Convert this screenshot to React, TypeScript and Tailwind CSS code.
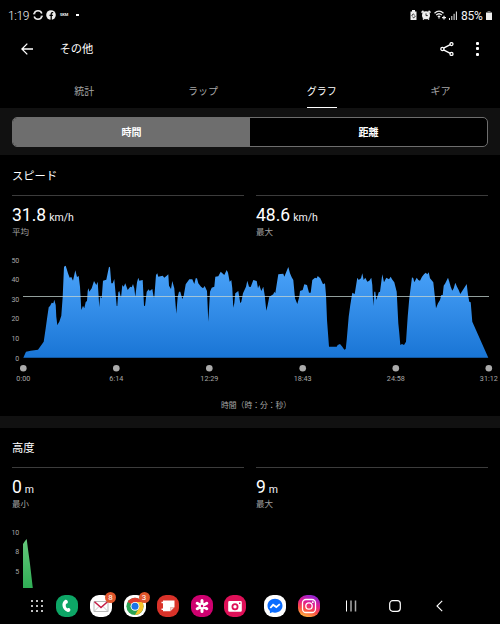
import type { ReactNode } from 'react';

// Speed samples, three points per pixel, 0 at the bottom is y=338
const speedSegments = [
  {
    start: 0,
    points:
      '70,338 78,320 92,317 114,314 131,290 137,250 142,215 146,187 150,183 155,173 160,175 163,164 167,180 169,215 172,240 178,230 184,212 188,155 192,65 197,62 204,85 209,98 214,96 219,107 226,76 231,96 236,93 240,125 244,195 249,182 253,190 257,171 261,168 263,137 266,130 268,140 275,130 282,108 289,120 293,110 298,187 300,155 305,160 309,107 319,104 327,65 330,67 334,115 338,115 343,102 350,183 352,183 355,142 358,138 363,158 367,120 371,125 376,115 383,135 391,125 395,127 399,117 403,130 406,155 411,112 415,98 418,107 428,105 432,182 435,183 440,140 446,133 449,138 457,132 461,157 463,157 468,90 472,85 475,95 488,92 493,98 500,92',
  },
  {
    start: 495,
    points:
      '10,88 12,122 18,132 22,108 28,130 34,206 38,155 42,140 46,140 52,162 56,152 62,118 73,103 82,103 88,117 92,100 96,100 100,115 108,125 114,130 119,123 126,138 130,230 135,140 140,128 148,125 151,95 160,94 167,80 178,90 185,75 189,83 194,110 199,105 202,130 205,188 208,175 211,145 220,138 226,175 229,170 234,145 243,125 247,107 252,125 257,126 265,105 275,108 279,130 283,120 289,138 295,125 299,150 304,197 308,180 313,155 325,148 328,140 331,145 340,88 355,86 358,95 370,66 375,85 380,97 385,105 390,160 397,177 403,155 405,138 413,135 418,118 426,120 432,143 437,143 442,105 450,98 455,100 458,93 466,100 474,118 480,115 483,150 486,225 492,305',
  },
  {
    start: 990,
    points:
      '0,305 20,305 23,300 30,297 37,305 43,314 47,312 50,285 56,215 61,180 67,143 74,147 82,98 86,105 93,100 97,85 101,105 106,98 112,110 118,107 124,98 127,120 130,183 133,140 136,140 139,165 146,142 150,140 157,88 162,112 169,98 177,103 182,95 186,103 193,112 200,140 205,235 208,265 211,300 216,297 222,300 228,290 233,215 238,160 246,97 250,100 253,112 260,98 265,105 270,107 276,95 282,88 287,83 292,88 296,82 300,100 310,112 314,150 318,190 324,175 330,165 334,150 338,150 341,122 346,115 354,98 358,110 362,125 367,137 371,130 376,113 381,125 386,135 391,147 402,130 410,117 414,150 418,170 422,172 427,230 475,338',
  },
];

const speedPoints = speedSegments
  .flatMap(({ start, points }) =>
    points.split(' ').map((p) => {
      const [x, y] = p.split(',').map(Number);
      return `${((x + start) / 3).toFixed(1)},${(y / 3).toFixed(1)}`;
    })
  )
  .join(' ');

const speedTicks = [
  { label: '50', y: 15 },
  { label: '40', y: 34.5 },
  { label: '30', y: 54 },
  { label: '20', y: 73.7 },
  { label: '10', y: 93.3 },
  { label: '0', y: 113 },
];

const timeTicks = [
  { label: '0:00', x: 23.3 },
  { label: '6:14', x: 116.3 },
  { label: '12:29', x: 209.3 },
  { label: '18:43', x: 302.7 },
  { label: '24:58', x: 395.8 },
  { label: '31:12', x: 488.8 },
];

const tabs = ['統計', 'ラップ', 'グラフ', 'ギア'];

function StatusBar() {
  return (
    <div className="flex h-[30px] shrink-0 items-center pl-2 pr-[8px] text-[11.5px] leading-none text-gray-100">
      <span className="mt-[1px] w-[21px] text-[12px] font-light tracking-[-0.4px]">1:19</span>
      <svg className="ml-1 h-[10px] w-[10px]" viewBox="0 0 10 10" fill="none" stroke="#eee" strokeWidth="1.5">
        <path d="M1.2 3.5A4 4 0 0 1 8.8 3.5M8.8 6.5A4 4 0 0 1 1.2 6.5" />
        <path d="M0 3.8h2.3M7.7 6.2H10" strokeWidth="1" />
      </svg>
      <svg className="ml-[3px] h-[10px] w-[10px]" viewBox="0 0 10 10">
        <circle cx="5" cy="5" r="4.8" fill="#eee" />
        <path d="M7.2 2.6H6.4Q5.2 2.6 5.2 4V10M3.5 5.3h3.4" fill="none" stroke="#000" strokeWidth="1.3" />
      </svg>
      <span className="ml-1 w-[9px] text-[4px] font-bold">5KM</span>
      <span className="ml-[7px] h-[2px] w-[3px] bg-white" />

      <div className="ml-auto flex items-center">
        <svg className="h-[10px] w-[7px]" viewBox="0 0 7 10">
          <path d="M2 0h3v1.4h1.5V10h-6V1.4H2z" fill="#eee" />
          <path d="M2.2 6.2A1.3 1.3 0 0 1 4.5 4.8M4.8 5.6A1.3 1.3 0 0 1 2.5 7" stroke="#000" strokeWidth=".8" fill="none" />
        </svg>
        <svg className="ml-[4px] h-[10px] w-[10px]" viewBox="0 0 10 10">
          <circle cx="5" cy="5.3" r="4" fill="#eee" />
          <path d="M.5 2.6 2.5.8M9.5 2.6 7.5.8M2 9.5l1-1M8 9.5l-1-1" stroke="#eee" strokeWidth="1.6" />
          <path d="M5 3.4v2.2h1.8" stroke="#000" strokeWidth=".8" fill="none" />
        </svg>
        <svg className="ml-[3px] h-[10px] w-[12px]" viewBox="0 0 12 10" fill="none" stroke="#eee" strokeWidth="1.3">
          <path d="M.5 3.2Q5 -1 9.5 3.2M2.2 5Q5 2.4 7.8 5M3.8 6.8Q5 5.7 6.2 6.8" />
          <path d="M5 7.2v1.4M8 7.6h4M10 5.8v3.6" />
        </svg>
        <svg className="ml-[3px] h-[9px] w-[8px]" viewBox="0 0 8 9" stroke="#eee">
          <path d="M.5 7v2M2.8 5v4M5.1 2.8V9M7.4.5V9" />
        </svg>
        <span className="ml-1 mt-[1px] w-[25px] text-[12px] tracking-[-0.3px]">85%</span>
        <svg className="h-[9px] w-[6px]" viewBox="0 0 6 9">
          <path d="M1.5 0h3v1H6v1.5H0V1h1.5z" fill="#777" />
          <path d="M0 2h6v7H0z" fill="#eee" />
        </svg>
      </div>
    </div>
  );
}

function Stat({ value, unit, label }: { value: string; unit: string; label: string }) {
  return (
    <div className="h-[50px] w-[232px] border-t border-[#3c3c3c] pt-[8px]">
      <div className="flex h-[22px] items-baseline gap-[3px] leading-[22px]">
        <span className="text-[17.5px] text-white">{value}</span>
        <span className="text-[10.5px] text-gray-100">{unit}</span>
      </div>
      <div className="text-[8.5px] leading-[12px] text-[#a0a0a0]">{label}</div>
    </div>
  );
}

function SpeedChart() {
  return (
    <svg className="block h-[171px] w-[500px] shrink-0" viewBox="0 0 500 171">
      <defs>
        <linearGradient id="speed" x1="0" y1="20" x2="0" y2="113" gradientUnits="userSpaceOnUse">
          <stop offset="0" stopColor="#4ba3fa" />
          <stop offset="1" stopColor="#1975d5" />
        </linearGradient>
      </defs>
      <polygon points={speedPoints} fill="url(#speed)" />
      <path d="M23 51.5H489" stroke="#c4d4d0" strokeOpacity="0.75" />
      {speedTicks.map(({ label, y }) => (
        <text key={label} x="19.3" y={y + 2.6} fontSize="7" textAnchor="end" fill="#a8a8a8">
          {label}
        </text>
      ))}
      {timeTicks.map(({ label, x }) => (
        <g key={label}>
          <circle cx={x} cy="123.3" r="3.3" fill="#ababab" />
          <text x={x} y="135.7" fontSize="7.2" textAnchor="middle" fill="#a8a8a8">
            {label}
          </text>
        </g>
      ))}
      <text x="221" y="162.8" fontSize="7.8" fill="#a8a8a8">
        時間（時：分：秒）
      </text>
    </svg>
  );
}

function AltitudeChart() {
  return (
    <svg className="block h-[71px] w-[500px]" viewBox="0 0 500 71">
      <defs>
        <linearGradient id="altitude" x1="0" y1="22" x2="0" y2="71" gradientUnits="userSpaceOnUse">
          <stop offset="0" stopColor="#66c97d" />
          <stop offset="1" stopColor="#2fae55" />
        </linearGradient>
      </defs>
      <polygon points="23,71 23,27 25,24 26.7,22 27.7,30 30,47 32.8,71" fill="url(#altitude)" />
      <g fontSize="7" textAnchor="end" fill="#a8a8a8">
        <text x="19.3" y="17.6">10</text>
        <text x="19.3" y="37.1">8</text>
        <text x="19.3" y="56.9">5</text>
      </g>
    </svg>
  );
}

function AppIcon({ className, badge, children }: { className: string; badge?: string; children: ReactNode }) {
  return (
    <div className={`relative h-[22px] w-[22px] shrink-0 rounded-[9px] ${className}`}>
      <svg className="h-[22px] w-[22px]" viewBox="0 0 22 22" fill="none">
        {children}
      </svg>
      {badge && (
        <span className="absolute -right-[4px] -top-[3px] flex h-[11px] w-[11px] items-center justify-center rounded-full bg-[#e0562b] text-[8px] leading-none text-white">
          {badge}
        </span>
      )}
    </div>
  );
}

function Taskbar() {
  return (
    <div className="flex h-[36px] shrink-0 items-center pl-[31px]">
      <svg className="h-[12px] w-[12px]" viewBox="0 0 12 12" fill="#fff">
        {[1, 6, 11].map((y) => [1, 6, 11].map((x) => <circle key={`${x}-${y}`} cx={x} cy={y} r="1" />))}
      </svg>

      {/* Apps */}
      <div className="ml-[13.4px] flex gap-[11.6px]">
        <AppIcon className="bg-[#0da666]">
          <path
            d="M8.7 5.2c-4 2.6-2.4 9.7 2.5 11.5 1.7.6 3-.2 3.2-1.7.1-1.5-1.6-2.5-3-1.5-1.8-1-2.1-3.7-1.2-4.8 1.5 0 2.2-1.8 1.3-3-.7-.9-1.8-1.1-2.8-.5z"
            fill="#fff"
          />
        </AppIcon>
        <AppIcon className="bg-white" badge="8">
          <path d="M4 6.5h14v10H4z" stroke="#b9b9b9" />
          <path d="M4 16.5l5-5M18 16.5l-5-5" stroke="#c9c9c9" />
          <path d="M4.5 6.7 11 12.6l6.5-5.9" stroke="#c41c45" strokeWidth="1.5" />
        </AppIcon>
        <AppIcon className="bg-white" badge="3">
          <circle cx="11" cy="11.3" r="8.6" fill="#2aa252" />
          <path d="M11 11.3 3.6 7A8.6 8.6 0 0 1 18.4 7z" fill="#df3b2f" />
          <path d="M11 7h7.4A8.6 8.6 0 0 1 11 19.9l3.7-6.5z" fill="#f8c32a" />
          <circle cx="11" cy="11.3" r="4.4" fill="#fff" />
          <circle cx="11" cy="11.3" r="3.5" fill="#1a73e8" />
        </AppIcon>
        <AppIcon className="bg-[#d93229]">
          <path d="M6 5.5h11.5v6.8h-4v3.9H6z" fill="#fff" />
          <path d="M13.5 16.2v-3.9h4z" fill="#f0d5d3" />
          <path d="M4.5 7.5H7M4.5 14.2H7" stroke="#fff" strokeWidth="1.4" />
        </AppIcon>
        <AppIcon className="bg-[#cf006f]">
          <g stroke="#fff" strokeWidth="3" strokeLinecap="round">
            <path d="M11 5.4v11.2M6.2 8.2l9.6 5.6M15.8 8.2l-9.6 5.6" />
          </g>
          <circle cx="11" cy="11" r="1.2" fill="#cf006f" />
        </AppIcon>
        <AppIcon className="bg-[#df1058]">
          <path d="M5.5 6.1h11a1.3 1.3 0 0 1 1.3 1.3v8a1.3 1.3 0 0 1-1.3 1.3h-11a1.3 1.3 0 0 1-1.3-1.3v-8a1.3 1.3 0 0 1 1.3-1.3z" fill="#fff" />
          <circle cx="11" cy="11.7" r="2.6" stroke="#df1058" strokeWidth="1.8" />
          <path d="M15 8.3h1.4" stroke="#df1058" strokeWidth="1.4" />
        </AppIcon>
      </div>
      <div className="ml-[17.5px] flex gap-[12px]">
        <AppIcon className="bg-white">
          <path d="M11 3.8c-4.4 0-7.5 3.1-7.5 7 0 2.2 1 3.9 2.4 5.1v2.3l2.3-1c.9.3 1.8.5 2.8.5 4.4 0 7.5-3.1 7.5-6.9s-3.1-7-7.5-7z" fill="#0a6cff" />
          <path d="m6.3 13 2.8-3.2 3.2 2.3 3.5-3" stroke="#fff" strokeWidth="1.8" />
        </AppIcon>
        <AppIcon className="bg-[linear-gradient(20deg,#ffc13b_5%,#fb4c45_35%,#e01b91_60%,#7829ed_100%)]">
          <rect x="4.5" y="4.5" width="13" height="13" rx="3.5" stroke="#fff" strokeWidth="1.3" />
          <circle cx="11" cy="11" r="3.2" stroke="#fff" strokeWidth="1.3" />
          <circle cx="14.8" cy="7.2" r=".9" fill="#fff" />
        </AppIcon>
      </div>

      {/* Navigation keys */}
      <svg className="ml-[25px] h-[12px] w-[12px]" viewBox="0 0 12 12">
        <path d="M1.5 .5v11M6 .5v11" stroke="#fff" />
        <path d="M10.5 .5v11" stroke="#aaa" strokeWidth="1.5" />
      </svg>
      <svg className="ml-[32px] h-[12px] w-[12px]" viewBox="0 0 12 12" fill="none" stroke="#fff">
        <rect x=".7" y=".7" width="10.6" height="10.6" rx="3" strokeWidth="1.2" />
      </svg>
      <svg className="ml-[35px] h-[12px] w-[7px]" viewBox="0 0 7 12" fill="none" stroke="#fff">
        <path d="M6.2 .8 1 6l5.2 5.2" strokeWidth="1.1" />
      </svg>
    </div>
  );
}

export default function App() {
  return (
    <div className="flex h-[624px] w-[500px] flex-col overflow-hidden bg-black font-[Roboto,'Noto_Sans_CJK_JP',sans-serif] text-white">
      <StatusBar />

      {/* Header */}
      <div className="flex h-[37px] shrink-0 items-center pl-[21px] pr-[21px]">
        <svg className="h-[12px] w-[12px]" viewBox="0 0 12 12" fill="none" stroke="#fff" strokeWidth="1.3">
          <path d="M12 6H1M6.3.6.9 6l5.4 5.4" />
        </svg>
        <h1 className="ml-[26.5px] mt-[2px] text-[11.3px] leading-none">その他</h1>
        <svg className="ml-auto h-[14px] w-[14px]" viewBox="0 0 14 14" fill="none" stroke="#fff" strokeWidth="1.3">
          <path d="M3.5 6.1 10.3 2.6M3.5 7.9l6.8 3.5" />
          <circle cx="2.4" cy="7" r="1.6" />
          <circle cx="11.5" cy="2.1" r="1.5" />
          <circle cx="11.5" cy="11.9" r="1.5" />
        </svg>
        <div className="ml-[22px] flex w-[3px] flex-col gap-[2.5px]">
          <span className="h-[3px] w-[3px] rounded-[1px] bg-white" />
          <span className="h-[3px] w-[3px] rounded-[1px] bg-white" />
          <span className="h-[3px] w-[3px] rounded-[1px] bg-white" />
        </div>
      </div>

      {/* Tabs */}
      <div className="flex h-[41px] shrink-0 pl-[25px]">
        {tabs.map((tab) => (
          <div
            key={tab}
            className={`flex w-[118.7px] justify-center text-[10px] leading-[49px] ${tab === 'グラフ' ? 'text-white' : 'text-[#a6a6a6]'}`}
          >
            <span className={`h-[41px] ${tab === 'グラフ' ? 'border-b border-white' : ''}`}>{tab}</span>
          </div>
        ))}
      </div>

      {/* Time / distance switch */}
      <div className="h-[47px] shrink-0 bg-[#111] px-3 pt-[9px]">
        <div className="flex h-[30px] overflow-hidden rounded-[5px] border border-[#6e6e6e] bg-black text-center text-[10px] font-bold leading-[29px]">
          <div className="w-1/2 bg-[#6e6e6e]">時間</div>
          <div className="w-1/2">距離</div>
        </div>
      </div>

      {/* Speed */}
      <div className="h-[90px] shrink-0 px-3">
        <h2 className="h-[40px] text-[11.3px] leading-[43px]">スピード</h2>
        <div className="flex gap-3">
          <Stat value="31.8" unit="km/h" label="平均" />
          <Stat value="48.6" unit="km/h" label="最大" />
        </div>
      </div>
      <SpeedChart />
      <div className="h-[12px] shrink-0 bg-[#111]" />

      {/* Altitude */}
      <div className="h-[160px] shrink-0 overflow-hidden">
        <div className="px-3">
          <h2 className="h-[39px] text-[11.3px] leading-[42px]">高度</h2>
          <div className="flex gap-3">
            <Stat value="0" unit="m" label="最小" />
            <Stat value="9" unit="m" label="最大" />
          </div>
        </div>
        <AltitudeChart />
      </div>

      <Taskbar />
    </div>
  );
}
